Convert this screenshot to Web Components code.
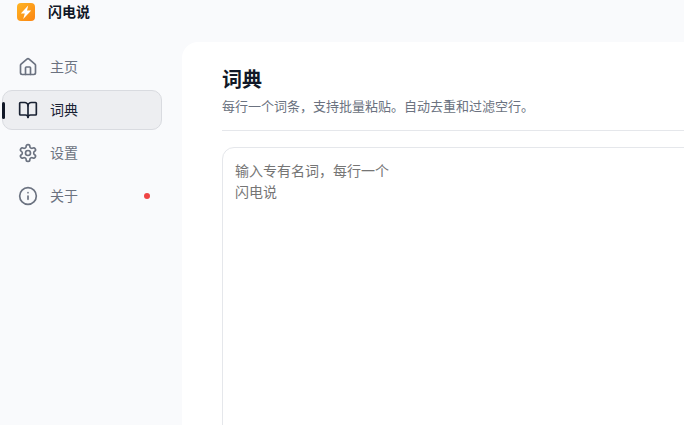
<!DOCTYPE html>
<html lang="zh">
<head>
<meta charset="utf-8">
<title>闪电说</title>
<style>
  html, body { margin: 0; height: 100%; overflow: hidden; background: #f9fafc; }
  body { font-family: "Noto Sans CJK SC", "Inter", sans-serif; }
</style>
</head>
<body>
<app-shell>
  <title-bar slot="top">闪电说</title-bar>
  <nav-item slot="side" icon="home">主页</nav-item>
  <nav-item slot="side" icon="book" active>词典</nav-item>
  <nav-item slot="side" icon="gear">设置</nav-item>
  <nav-item slot="side" icon="info" dot>关于</nav-item>
  <dict-page>
    <span slot="title">词典</span>
    <span slot="sub">每行一个词条，支持批量粘贴。自动去重和过滤空行。</span>
    <word-box>输入专有名词，每行一个<br>闪电说</word-box>
  </dict-page>
</app-shell>
<script>
class appShell extends HTMLElement {
  constructor() {
    super();
    this.attachShadow({ mode: "open" });
    this.shadowRoot.innerHTML = `
      <style>
        :host { display: grid; grid-template-columns: 182px 800px; grid-template-rows: 42px 700px; width: 982px; }
        .top { grid-column: 1 / 3; }
        .side { display: flex; flex-direction: column; gap: 3px; padding: 5px 20px 0 2px; }
      </style>
      <div class="top"><slot name="top"></slot></div>
      <div class="side"><slot name="side"></slot></div>
      <slot></slot>
    `;
  }
}
customElements.define("app-shell", appShell);

class titleBar extends HTMLElement {
  constructor() {
    super();
    this.attachShadow({ mode: "open" });
    this.shadowRoot.innerHTML = `
      <style>
        :host { display: flex; align-items: flex-start; height: 42px; padding: 3px 0 0 17px; box-sizing: border-box;
          font-size: 14px; font-weight: 700; color: #111827; }
        svg { width: 18px; height: 18px; display: block; }
        span { margin-left: 13px; line-height: 16px; }
      </style>
      <svg viewBox="0 0 18 18">
        <defs><linearGradient id="g" x1="0" y1="0" x2="1" y2="1">
          <stop offset="0" stop-color="#ffb524"/><stop offset="1" stop-color="#fb8412"/>
        </linearGradient></defs>
        <rect width="18" height="18" rx="4" fill="url(#g)"/>
        <path d="M11.2 2.4 3.8 10.4h4L6.2 16l8-8.6H10z" fill="#fff"/>
      </svg>
      <span><slot></slot></span>
    `;
  }
}
customElements.define("title-bar", titleBar);

const ICONS = {
  home: '<path d="M15 21v-8a1 1 0 0 0-1-1h-4a1 1 0 0 0-1 1v8"/><path d="M3 10a2 2 0 0 1 .7-1.5l7-6a2 2 0 0 1 2.6 0l7 6A2 2 0 0 1 21 10v9a2 2 0 0 1-2 2H5a2 2 0 0 1-2-2z"/>',
  book: '<path d="M12 7v14"/><path d="M3 18a1 1 0 0 1-1-1V4a1 1 0 0 1 1-1h5a4 4 0 0 1 4 4 4 4 0 0 1 4-4h5a1 1 0 0 1 1 1v13a1 1 0 0 1-1 1h-6a3 3 0 0 0-3 3 3 3 0 0 0-3-3z"/>',
  gear: '<path d="M12.22 2h-.44a2 2 0 0 0-2 2v.18a2 2 0 0 1-1 1.73l-.43.25a2 2 0 0 1-2 0l-.15-.08a2 2 0 0 0-2.73.73l-.22.38a2 2 0 0 0 .73 2.73l.15.1a2 2 0 0 1 1 1.72v.51a2 2 0 0 1-1 1.74l-.15.09a2 2 0 0 0-.73 2.73l.22.38a2 2 0 0 0 2.73.73l.15-.08a2 2 0 0 1 2 0l.43.25a2 2 0 0 1 1 1.73V20a2 2 0 0 0 2 2h.44a2 2 0 0 0 2-2v-.18a2 2 0 0 1 1-1.73l.43-.25a2 2 0 0 1 2 0l.15.08a2 2 0 0 0 2.73-.73l.22-.39a2 2 0 0 0-.73-2.73l-.15-.08a2 2 0 0 1-1-1.74v-.5a2 2 0 0 1 1-1.74l.15-.09a2 2 0 0 0 .73-2.73l-.22-.38a2 2 0 0 0-2.73-.73l-.15.08a2 2 0 0 1-2 0l-.43-.25a2 2 0 0 1-1-1.73V4a2 2 0 0 0-2-2z"/><circle cx="12" cy="12" r="3"/>',
  info: '<circle cx="12" cy="12" r="10"/><path d="M12 16v-4"/><path d="M12 8h.01"/>'
};

class navItem extends HTMLElement {
  constructor() {
    super();
    this.attachShadow({ mode: "open" });
  }
  connectedCallback() {
    const icon = ICONS[this.getAttribute("icon")];
    this.shadowRoot.innerHTML = `
      <style>
        :host { display: flex; align-items: center; position: relative; height: 40px; box-sizing: border-box;
          padding-left: 15px; border: 1px solid transparent; border-radius: 10px;
          font-size: 14px; line-height: 20px; color: #6b7280; }
        :host([active]) { background: #edeef1; border-color: #d9dbe0; color: #1a2233; }
        :host([active])::before { content: ""; position: absolute; left: -1px; top: 11px; width: 3px; height: 17px;
          background: #111827; border-radius: 2px; }
        svg { width: 20px; height: 20px; fill: none; stroke: currentColor; stroke-width: 2;
          stroke-linecap: round; stroke-linejoin: round; flex: none; }
        span { margin: 0 0 2px 12px; flex: 1; }
        i { width: 6px; height: 6px; border-radius: 50%; background: #ef4444; margin-right: 11px; }
      </style>
      <svg viewBox="0 0 24 24">${icon}</svg>
      <span><slot></slot></span>
      ${this.hasAttribute("dot") ? "<i></i>" : ""}
    `;
  }
}
customElements.define("nav-item", navItem);

class dictPage extends HTMLElement {
  constructor() {
    super();
    this.attachShadow({ mode: "open" });
    this.shadowRoot.innerHTML = `
      <style>
        :host { display: block; background: #fff; border-radius: 16px 0 0 0; padding: 24px 0 0 40px; box-sizing: border-box; }
        h1 { margin: 0 0 5px; font-size: 20px; line-height: 26px; font-weight: 700; color: #111827; }
        p { margin: 0; font-size: 13px; line-height: 18px; color: #6b7280; }
        hr { margin: 15px 0 16px; border: 0; border-top: 1px solid #e5e7eb; }
      </style>
      <h1><slot name="title"></slot></h1>
      <p><slot name="sub"></slot></p>
      <hr>
      <slot></slot>
    `;
  }
}
customElements.define("dict-page", dictPage);

class wordBox extends HTMLElement {
  constructor() {
    super();
    this.attachShadow({ mode: "open" });
    this.shadowRoot.innerHTML = `
      <style>
        :host { display: block; height: 500px; box-sizing: border-box; padding: 12px 12px; border: 1px solid #e5e7eb;
          border-radius: 12px; font-size: 14px; line-height: 21px; color: #757575; }
      </style>
      <slot></slot>
    `;
  }
}
customElements.define("word-box", wordBox);
</script>
</body>
</html>
